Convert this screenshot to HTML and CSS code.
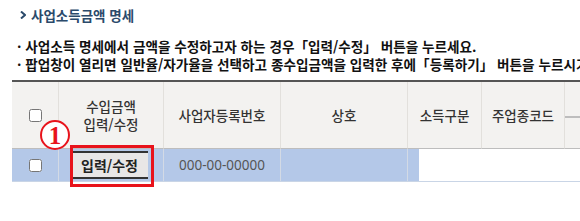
FILE: index.html
```html
<!DOCTYPE html>
<html lang="ko">
<head>
<meta charset="utf-8">
<link rel="stylesheet" href="styles.css">
</head>
<body>
<div class="page">
  <div class="title">
    <svg class="chev" width="6" height="8" viewBox="0 0 6 8"><path d="M1 0.5 L5 4 L1 7.5" fill="none" stroke="#2b4a6b" stroke-width="2"/></svg>
    <span>사업소득금액 명세</span>
  </div>
  <div class="notes">
    <p>· 사업소득 명세에서 금액을 수정하고자 하는 경우「입력/수정」 버튼을 누르세요.</p>
    <p>· 팝업창이 열리면 일반율/자가율을 선택하고 종수입금액을 입력한 후에「등록하기」 버튼을 누르시기</p>
  </div>
  <div class="grid">
    <div class="h c-chk"><input type="checkbox"></div>
    <div class="h c-edit"><span>수입금액</span><span>입력/수정</span></div>
    <div class="h">사업자등록번호</div>
    <div class="h">상호</div>
    <div class="h">소득구분</div>
    <div class="h">주업종코드</div>
    <div class="h c-split"><div class="split-top"></div><div></div></div>

    <div class="d c-chk"><input type="checkbox"></div>
    <div class="d c-btn">
      <span class="mark">1</span>
      <button class="edit">입력/수정</button>
      <span class="hl"></span>
    </div>
    <div class="d num">000-00-00000</div>
    <div class="d"></div>
    <div class="d c-blank"><span class="blank"></span></div>
    <div class="d"></div>
    <div class="d"></div>
  </div>
</div>
</body>
</html>
```

FILE: styles.css
```css
html, body {
  margin: 0;
  padding: 0;
  background: #fff;
  overflow: hidden;
}
.page {
  width: 580px;
  height: 221px;
  font-family: "Noto Sans CJK KR", "Noto Sans", sans-serif;
}
.title {
  display: flex;
  align-items: center;
  gap: 5px;
  padding: 6px 0 0 20px;
  height: 18px;
  color: #2b4a6b;
  font-size: 13.5px;
  font-weight: 700;
}
.chev { flex: none; }
.notes {
  margin-top: 13px;
  padding-left: 17px;
  white-space: nowrap;
  overflow: hidden;
}
.notes p {
  margin: 0;
  font-size: 13.6px;
  font-weight: 700;
  line-height: 18px;
  color: #111;
}
.grid {
  margin: 7px 0 0 12px;
  display: grid;
  grid-template-columns: 46px 105px 117px 127px 74px 83px 16px;
  grid-template-rows: 67px 32px;
  border-top: 2px solid #555;
  border-bottom: 1px solid #c9d5e6;
}
.h {
  background: #f3f2f0;
  border-left: 1px solid #e2e0dc;
  border-bottom: 1px solid #bdbdbd;
  display: flex;
  align-items: center;
  justify-content: center;
  text-align: center;
  font-size: 13.5px;
  font-weight: 500;
  color: #333;
  line-height: 18px;
}
.h.c-chk { border-left: none; }
.c-edit {
  flex-direction: column;
}
.c-split {
  flex-direction: column;
  align-items: stretch;
  justify-content: flex-start;
}
.split-top {
  height: 34px;
  border-bottom: 2px solid #bdbdbd;
}
.d {
  background: #b4c8e8;
  border-left: 1px solid #d3dae5;
  display: flex;
  align-items: center;
  justify-content: center;
  position: relative;
}
.d.c-chk { border-left: none; }
input[type="checkbox"] {
  margin: 0;
  width: 13px;
  height: 13px;
}
.num {
  font-family: "Noto Sans", sans-serif;
  font-size: 13.5px;
  color: #555;
}
.c-btn { justify-content: flex-start; padding-left: 11px; }
.edit {
  width: 78px;
  height: 28px;
  background: #e8e6e6;
  border: none;
  border-top: 2px solid #333;
  border-bottom: 2px solid #333;
  border-left: 1px solid #555;
  font-family: "Noto Sans CJK KR", sans-serif;
  font-size: 14px;
  font-weight: 700;
  color: #222;
  padding: 0;
}
.hl {
  position: absolute;
  left: 11px;
  top: -4px;
  width: 78px;
  height: 36px;
  border: 3px solid #e8131b;
}
.mark {
  position: absolute;
  left: -19px;
  top: -29px;
  width: 26px;
  height: 26px;
  border: 2.5px solid #e8131b;
  border-radius: 50%;
  background: #fff;
  color: #e8131b;
  font-family: "Liberation Serif", serif;
  font-weight: 700;
  font-size: 25px;
  line-height: 27px;
  text-align: center;
}
.c-blank { justify-content: flex-start; }
.blank {
  position: absolute;
  left: 11px;
  top: 0;
  width: 200px;
  height: 32px;
  background: #fff;
  z-index: 1;
}
```
